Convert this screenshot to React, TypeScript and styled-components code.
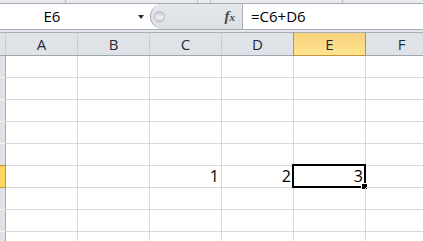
import React from 'react';
import styled, { createGlobalStyle } from 'styled-components';

const GlobalStyle = createGlobalStyle`
  html, body {
    margin: 0;
    padding: 0;
    background: #ffffff;
    overflow: hidden;
  }
`;

const Window = styled.div`
  width: 423px;
  height: 241px;
  overflow: hidden;
  background: #e3e6ea;
  font-family: 'Open Sans', 'Liberation Sans', sans-serif;
`;

const TopStrip = styled.div`
  display: flex;
  height: 3px;
  background: #e8eaed;
`;

const Tick = styled.span<{ $gap: number }>`
  width: 1px;
  margin-left: ${(p) => p.$gap}px;
  background: #bcc1c8;
`;

const FormulaBar = styled.div`
  display: flex;
  height: 25px;
  border-top: 1px solid #a7acb4;
  border-bottom: 1px solid #a7acb4;
  background: #ffffff;
`;

const NameBox = styled.div`
  display: flex;
  align-items: center;
  width: 150px;
  background: #ffffff;
`;

const NameText = styled.div`
  width: 104px;
  text-align: center;
  font-size: 15px;
  line-height: 25px;
  color: #000;
`;

const DropArrow = styled.span`
  margin-left: 34px;
  width: 0;
  height: 0;
  border-left: 3px solid transparent;
  border-right: 3px solid transparent;
  border-top: 4px solid #2b2b2b;
`;

const Grip = styled.div`
  display: flex;
  align-items: center;
  width: 92px;
  border-left: 1px solid #a3a8b0;
  border-radius: 13px 0 0 13px;
  background: linear-gradient(#e4e7eb, #dcdfe4);
  padding-left: 3px;
  box-sizing: border-box;
`;

const Knob = styled.span`
  width: 9px;
  height: 9px;
  border-radius: 50%;
  border: 1px solid #b3b7be;
  background: linear-gradient(#c9cdd3, #eef0f2 60%, #d2d6db);
`;

const Fx = styled.span`
  margin-left: auto;
  margin-right: 7px;
  font-family: 'Liberation Serif', 'DejaVu Serif', serif;
  font-style: italic;
  font-weight: bold;
  font-size: 15px;
  color: #4a4a4a;
`;

const FxSub = styled.span`
  font-size: 11px;
`;

const FormulaInput = styled.div`
  flex: 1;
  border-left: 1px solid #abb0b7;
  padding-left: 8px;
  font-size: 15px;
  line-height: 25px;
  color: #000;
`;

const Gap = styled.div`
  height: 2px;
`;

const Sheet = styled.div`
  display: grid;
  grid-template-columns: 6px repeat(6, 72px);
  grid-template-rows: 24px repeat(9, 22px);
  background: #ffffff;
`;

const Corner = styled.div`
  box-sizing: border-box;
  background: #dfe3e8;
  border-top: 1px solid #a9aeb5;
  border-bottom: 1px solid #a0a6ae;
  border-right: 1px solid #c6cbd1;
`;

const ColHead = styled.div<{ $active?: boolean }>`
  box-sizing: border-box;
  text-align: center;
  font-size: 15px;
  line-height: 22px;
  color: #1f2a38;
  border-top: 1px solid #a9aeb5;
  border-bottom: 1px solid ${(p) => (p.$active ? '#c3923a' : '#a0a6ae')};
  border-right: 1px solid ${(p) => (p.$active ? '#c3923a' : '#c6cbd1')};
  background: ${(p) =>
    p.$active ? 'linear-gradient(#f7d27c, #ffe48e)' : '#dfe3e8'};
  box-shadow: ${(p) => (p.$active ? '-1px 0 0 #c3923a' : 'none')};
`;

const RowHead = styled.div<{ $active?: boolean }>`
  box-sizing: border-box;
  background: ${(p) => (p.$active ? '#ffd75e' : '#dfe3e8')};
  border-right: 1px solid ${(p) => (p.$active ? '#c3923a' : '#a8aeb6')};
  border-bottom: 1px solid ${(p) => (p.$active ? '#c3923a' : '#f3f4f6')};
  box-shadow: ${(p) => (p.$active ? '0 -1px 0 #c3923a' : 'none')};
`;

const Cell = styled.div`
  position: relative;
  box-sizing: border-box;
  border-right: 1px solid #d9d9d9;
  border-bottom: 1px solid #d9d9d9;
  padding-right: 2px;
  text-align: right;
  font-size: 16px;
  line-height: 21px;
  color: #000;
`;

const Selection = styled.div`
  position: absolute;
  top: -2px;
  left: -2px;
  right: -1px;
  bottom: -1px;
  border: 2px solid #000;
  pointer-events: none;
`;

const FillHandle = styled.span`
  position: absolute;
  right: -4px;
  bottom: -4px;
  width: 5px;
  height: 5px;
  background: #000;
  border: 1px solid #fff;
`;

const columns = ['A', 'B', 'C', 'D', 'E', 'F'];
const activeCol = 'E';
const activeRow = 6;
const values: Record<string, string> = { C6: '1', D6: '2', E6: '3' };

const App: React.FC = () => {
  const rows = Array.from({ length: 9 }, (_, i) => i + 1);

  return (
    <Window>
      <GlobalStyle />
      <TopStrip>
        <Tick $gap={65} />
        <Tick $gap={131} />
        <Tick $gap={12} />
        <Tick $gap={131} />
      </TopStrip>
      <FormulaBar>
        <NameBox>
          <NameText>E6</NameText>
          <DropArrow />
        </NameBox>
        <Grip>
          <Knob />
          <Fx>
            f<FxSub>x</FxSub>
          </Fx>
        </Grip>
        <FormulaInput>=C6+D6</FormulaInput>
      </FormulaBar>
      <Gap />
      <Sheet>
        <Corner />
        {columns.map((c) => (
          <ColHead key={c} $active={c === activeCol}>
            {c}
          </ColHead>
        ))}
        {rows.map((r) => (
          <React.Fragment key={r}>
            <RowHead $active={r === activeRow} />
            {columns.map((c) => {
              const id = `${c}${r}`;
              const selected = c === activeCol && r === activeRow;
              return (
                <Cell key={id}>
                  {values[id]}
                  {selected && (
                    <Selection>
                      <FillHandle />
                    </Selection>
                  )}
                </Cell>
              );
            })}
          </React.Fragment>
        ))}
      </Sheet>
    </Window>
  );
};

export default App;
